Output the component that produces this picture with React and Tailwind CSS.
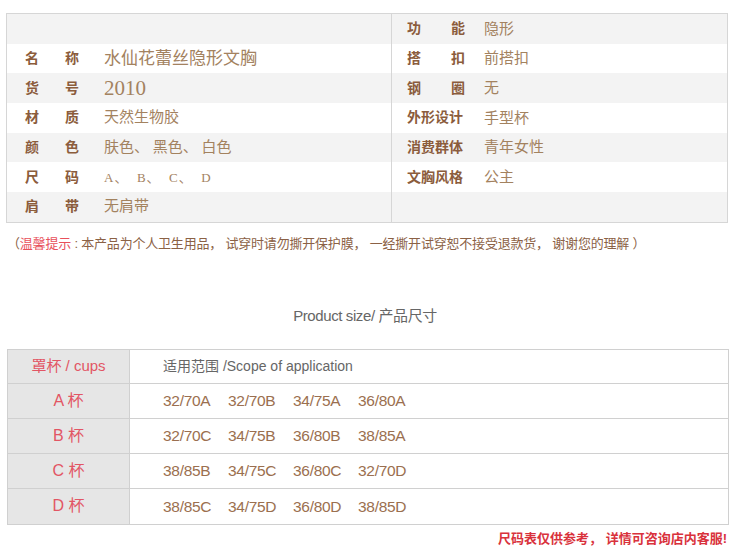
import React from "react";

const sans = "font-['Liberation_Sans','Noto_Sans_CJK_SC',sans-serif]";
const serif = "font-['Liberation_Serif','Noto_Sans_CJK_SC',serif]";

const leftRows = [
  null,
  { a: "名", b: "称", v: "水仙花蕾丝隐形文胸", cls: "text-[17px]" },
  { a: "货", b: "号", v: "2010", cls: "text-[21px]" },
  { a: "材", b: "质", v: "天然生物胶", cls: "text-[15px]" },
  { a: "颜", b: "色", v: "肤色、 黑色、 白色", cls: "text-[15px]" },
  { a: "尺", b: "码", v: "A、  B、  C、  D", cls: "text-[13px] whitespace-pre tracking-[1px]" },
  { a: "肩", b: "带", v: "无肩带", cls: "text-[15px]" },
];

const rightRows = [
  { l: ["功", "能"], v: "隐形" },
  { l: ["搭", "扣"], v: "前搭扣" },
  { l: ["钢", "圈"], v: "无" },
  { l: ["外形设计"], v: "手型杯" },
  { l: ["消费群体"], v: "青年女性" },
  { l: ["文胸风格"], v: "公主" },
  null,
];

const sizes = [
  { cup: "A", vals: ["32/70A", "32/70B", "34/75A", "36/80A"] },
  { cup: "B", vals: ["32/70C", "34/75B", "36/80B", "38/85A"] },
  { cup: "C", vals: ["38/85B", "34/75C", "36/80C", "32/70D"] },
  { cup: "D", vals: ["38/85C", "34/75D", "36/80D", "38/85D"] },
];

const rowBg = (i) => (i % 2 === 0 ? "bg-[#f3f3f3]" : "bg-white");

export default function App() {
  return (
    <div className={`w-[750px] h-[553px] bg-white overflow-hidden ${sans}`}>
      <div className="pt-[13px] pl-[6px]">
        <div className="w-[722px] border border-[#d6d6d6] flex">
          <div className="w-[385px] border-r border-[#d6d6d6]">
            {leftRows.map((r, i) => (
              <div key={i} className={`h-[29.7px] flex items-center ${rowBg(i)}`}>
                {r && (
                  <>
                    <span className="pl-[18px] w-[58px] text-[14px] font-bold text-[#8b5c3c]">{r.a}</span>
                    <span className="w-[39px] text-[14px] font-bold text-[#8b5c3c]">{r.b}</span>
                    <span className={`${serif} ${r.cls} text-[#a3825f] leading-none`}>{r.v}</span>
                  </>
                )}
              </div>
            ))}
          </div>
          <div className="flex-1">
            {rightRows.map((r, i) => (
              <div key={i} className={`h-[29.7px] flex items-center ${rowBg(i)}`}>
                {r && (
                  <>
                    <span className="ml-[15px] w-[58px] flex justify-between text-[14px] font-bold text-[#8b5c3c]">
                      {r.l.map((t) => (
                        <span key={t}>{t}</span>
                      ))}
                    </span>
                    <span className={`ml-[19px] ${serif} text-[15px] text-[#a3825f]`}>{r.v}</span>
                  </>
                )}
              </div>
            ))}
          </div>
        </div>
      </div>

      <div className="mt-[12px] pl-[7px] text-[13px] leading-[18px] text-[#8b6145] whitespace-nowrap tracking-[-0.2px]">
        （<span className="text-[#e8505b]">温馨提示</span> : 本产品为个人卫生用品， 试穿时请勿撕开保护膜， 一经撕开试穿恕不接受退款货， 谢谢您的理解 ）
      </div>

      <div className="mt-[53px] text-center pr-[20px] text-[15px] leading-[20px] text-[#666] tracking-[-0.4px]">
        Product size/ 产品尺寸
      </div>

      <div className="mt-[23px] pl-[7px]">
        <div className="w-[722px] border border-[#d0d0d0]">
          <div className="flex h-[34px] border-b border-[#d0d0d0]">
            <div className="w-[122px] bg-[#e6e6e6] border-r border-[#d0d0d0] flex items-center justify-center text-[15px] text-[#e25564]">
              罩杯 / cups
            </div>
            <div className="flex-1 flex items-center pl-[33px] text-[14px] text-[#666]">
              适用范围 /Scope of application
            </div>
          </div>
          {sizes.map((s, i) => (
            <div
              key={s.cup}
              className={`flex h-[35px] ${i < sizes.length - 1 ? "border-b border-[#d0d0d0]" : ""}`}
            >
              <div className="w-[122px] bg-[#e6e6e6] border-r border-[#d0d0d0] flex items-center justify-center text-[16px] text-[#e25564]">
                {s.cup} 杯
              </div>
              <div className="flex-1 flex items-center pl-[33px] text-[15.5px] text-[#9b6f4f] tracking-[-0.3px]">
                {s.vals.map((v) => (
                  <span key={v} className="w-[65px]">
                    {v}
                  </span>
                ))}
              </div>
            </div>
          ))}
        </div>
        <div className="w-[720px] mt-[5px] text-right text-[13px] leading-[18px] font-bold text-[#d9323c]">
          尺码表仅供参考， 详情可咨询店内客服!
        </div>
      </div>
    </div>
  );
}
